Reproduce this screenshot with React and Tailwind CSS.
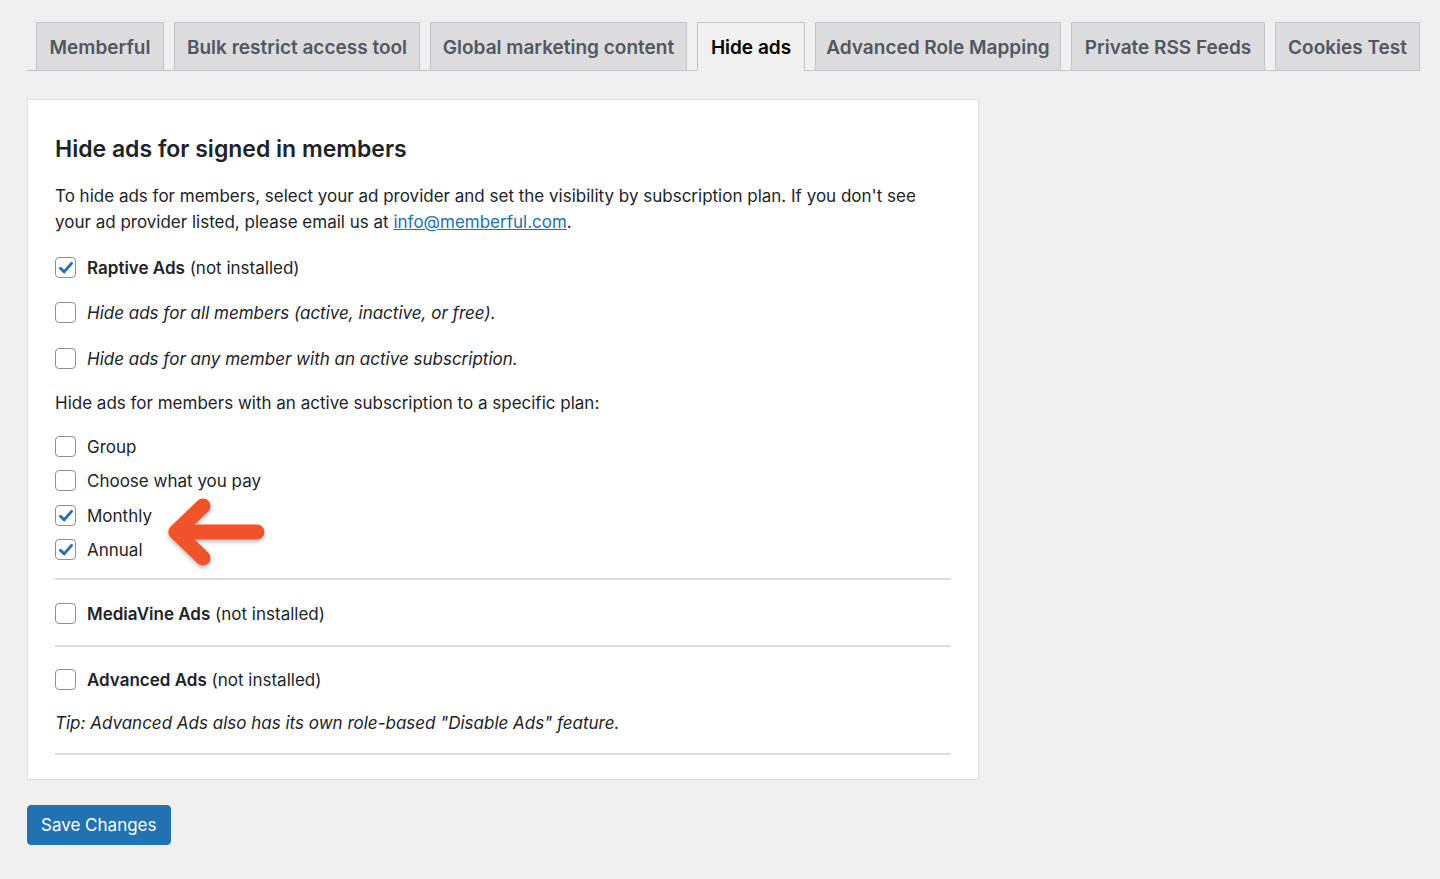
import { useState } from "react";

const tabs = [
  ["Memberful", "w-[128px]"],
  ["Bulk restrict access tool", "w-[246px]"],
  ["Global marketing content", "w-[257px]"],
  ["Hide ads", "w-[108px]"],
  ["Advanced Role Mapping", "w-[246px]"],
  ["Private RSS Feeds", "w-[194px]"],
  ["Cookies Test", "w-[145px]"],
];

function Check({ checked }) {
  return (
    <span className="w-[21px] h-[21px] shrink-0 -mt-[3px] rounded-[4px] border border-[#8c8f94] bg-white flex items-center justify-center">
      {checked && (
        <svg width="18" height="18" viewBox="0 0 20 20">
          <path d="M3.8 10.2 L8 14.3 L16.2 4.8" fill="none" stroke="#2271b1" strokeWidth="3.2" strokeLinecap="round" strokeLinejoin="round" />
        </svg>
      )}
    </span>
  );
}

function Row({ checked, children, className = "" }) {
  return (
    <label className={`h-[30px] flex items-center gap-[11px] ${className}`}>
      <Check checked={checked} />
      <span>{children}</span>
    </label>
  );
}

function Arrow() {
  return (
    <svg className="absolute left-[105px] top-[-13px]" width="115" height="85" viewBox="0 0 115 85">
      <defs>
        <filter id="sh" x="-20%" y="-20%" width="140%" height="150%">
          <feDropShadow dx="0" dy="2" stdDeviation="2" floodColor="#000" floodOpacity="0.3" />
        </filter>
      </defs>
      <g filter="url(#sh)" fill="none" stroke="#f0532b" strokeWidth="15" strokeLinecap="round" strokeLinejoin="round">
        <path d="M43 17 L16 43 L43 69" />
        <path d="M16 43 L97 43" />
      </g>
    </svg>
  );
}

export default function App() {
  const [active] = useState("Hide ads");

  return (
    <div className="min-h-[879px] bg-[#f0f0f1] text-[#1d2327] font-['Inter','Liberation_Sans',sans-serif] pt-[22px]">
      <div className="mx-[27px] w-[1393px] border-b border-[#c3c4c7] pl-[9px] flex gap-[10px]">
        {tabs.map(([t, w]) => (
          <div
            key={t}
            className={`${w} shrink-0 whitespace-nowrap h-[49px] -mb-px pt-[3px] flex items-center justify-center border border-[#c3c4c7] text-[19px] font-semibold ${
              t === active ? "bg-[#f0f0f1] border-b-[#f0f0f1] text-black" : "bg-[#dcdcde] text-[#50575e]"
            }`}
          >
            {t}
          </div>
        ))}
      </div>

      <div className="ml-[27px] mt-[28px] w-[952px] bg-white border border-[#dcdcde] px-[27px] pt-[34px] pb-[24px] text-[17px]">
        <h2 className="text-[23px] leading-[30px] font-semibold">Hide ads for signed in members</h2>
        <p className="mt-[19px] leading-[26px]">
          To hide ads for members, select your ad provider and set the visibility by subscription plan. If you don't see
          your ad provider listed, please email us at{" "}
          <a href="#" className="text-[#2271b1] underline">info@memberful.com</a>.
        </p>

        <Row checked className="mt-[19px]">
          <b className="font-semibold">Raptive Ads</b> (not installed)
        </Row>
        <Row className="mt-[15px]"><i>Hide ads for all members (active, inactive, or free).</i></Row>
        <Row className="mt-[16px]"><i>Hide ads for any member with an active subscription.</i></Row>
        <p className="mt-[15px] leading-[26px]">Hide ads for members with an active subscription to a specific plan:</p>
        <Row className="mt-[17px]">Group</Row>
        <Row className="mt-[4px]">Choose what you pay</Row>
        <div className="relative">
          <Row checked className="mt-[5px]">Monthly</Row>
          <Arrow />
        </div>
        <Row checked className="mt-[4px]">Annual</Row>
        <hr className="mt-[12px] border-0 border-t-2 border-[#dcdcde]" />
        <Row className="mt-[20px]">
          <b className="font-semibold">MediaVine Ads</b> (not installed)
        </Row>
        <hr className="mt-[15px] border-0 border-t-2 border-[#dcdcde]" />
        <Row className="mt-[19px]">
          <b className="font-semibold">Advanced Ads</b> (not installed)
        </Row>
        <p className="mt-[14px] leading-[26px] italic">Tip: Advanced Ads also has its own role-based "Disable Ads" feature.</p>
        <hr className="mt-[17px] border-0 border-t-2 border-[#dcdcde]" />
      </div>

      <button className="ml-[27px] mt-[25px] h-[40px] px-[13px] pt-[2px] rounded-[4px] bg-[#2271b1] border border-[#2271b1] text-white text-[17px]">
        Save Changes
      </button>
    </div>
  );
}
